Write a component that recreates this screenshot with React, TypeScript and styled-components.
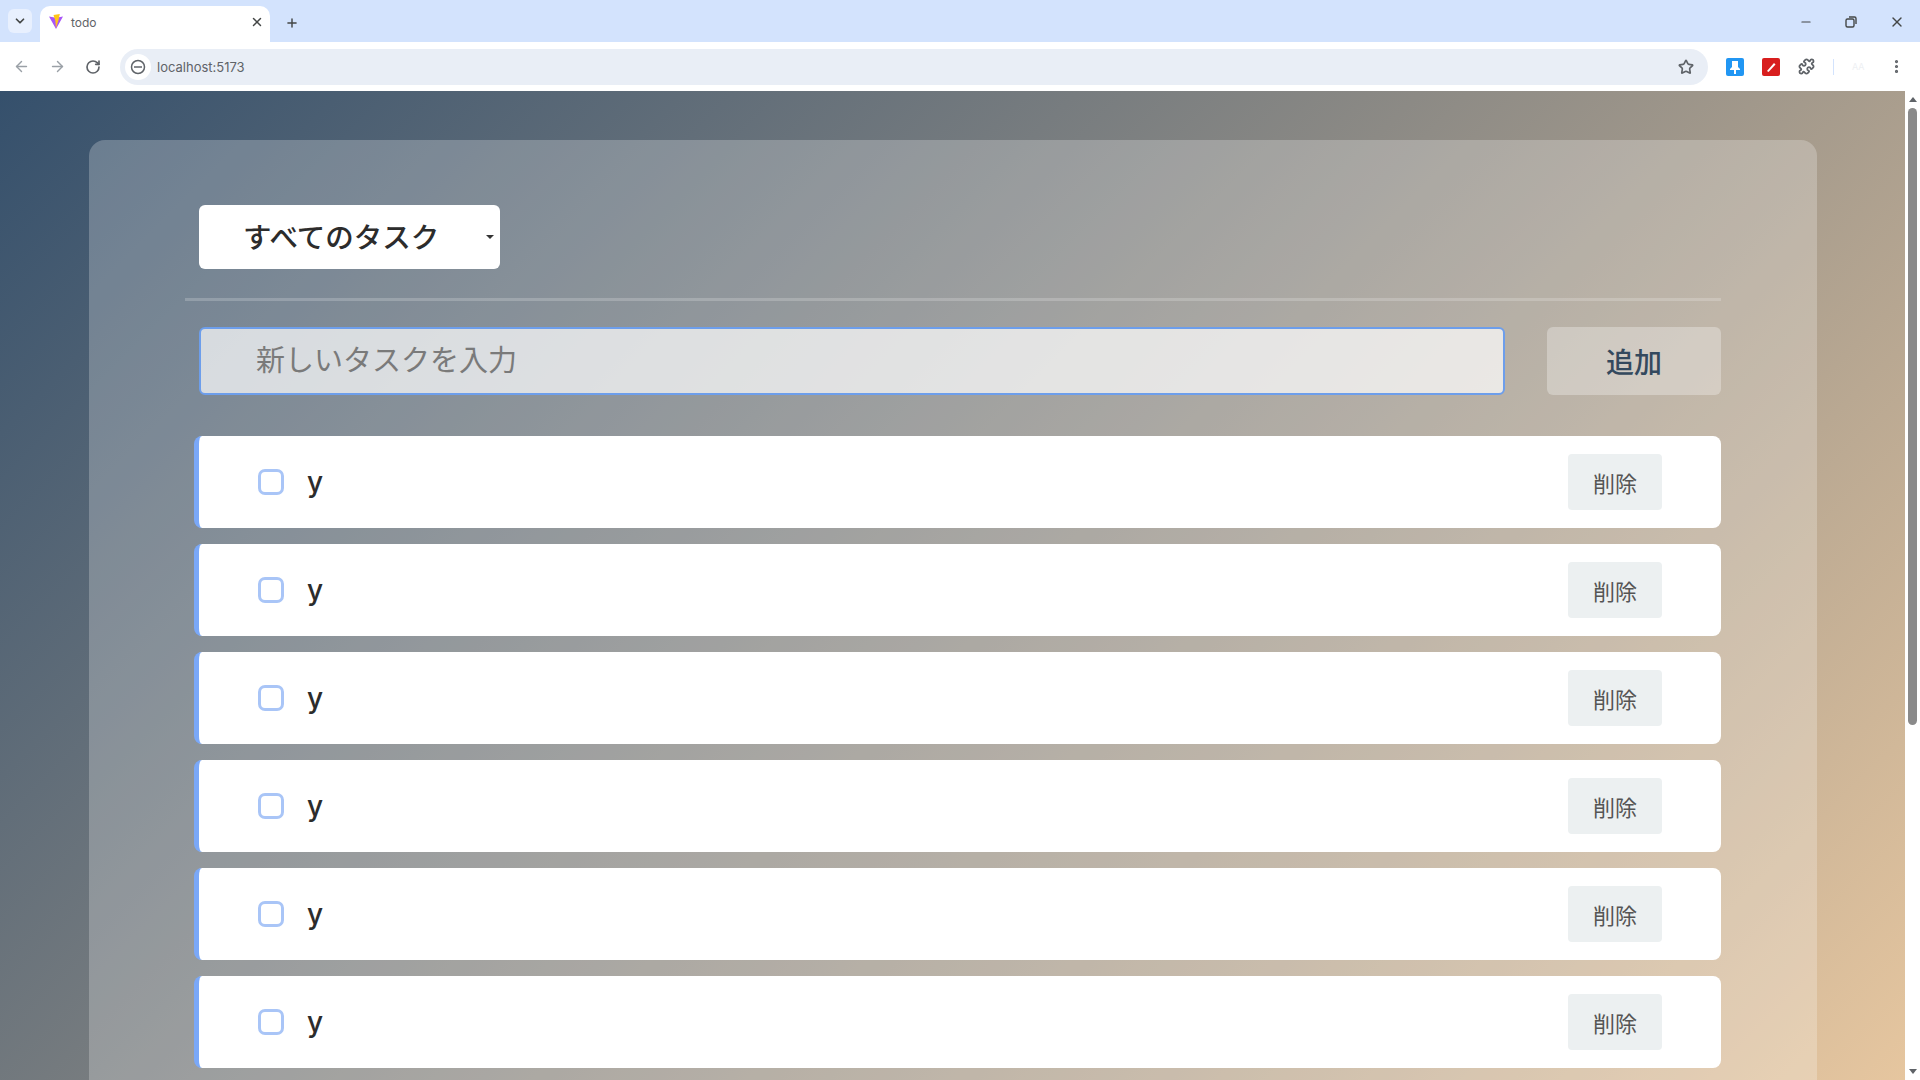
import React from "react";
import styled, { createGlobalStyle } from "styled-components";
import { ArrowLeft, ArrowRight, ChevronDown, EllipsisVertical, Minus, Plus, Puzzle, RotateCw, Star, X } from "lucide-react";

const GlobalStyle = createGlobalStyle`
  * { box-sizing: border-box; }
  html, body { margin: 0; height: 100%; overflow: hidden; }
  body { font-family: "Inter", "Noto Sans CJK JP", sans-serif; }
`;

const Shell = styled.div`
  display: flex;
  flex-direction: column;
  width: 1920px;
  height: 1080px;
  overflow: hidden;
`;

const TabStrip = styled.div`
  display: flex;
  align-items: flex-end;
  height: 42px;
  padding-left: 8px;
  background: #d3e3fd;
  color: #444746;
`;

const TabMenu = styled.div`
  display: flex;
  align-items: center;
  justify-content: center;
  width: 24px;
  height: 24px;
  margin: 0 8px 9px 0;
  border-radius: 6px;
  background: #e8f0fe;
`;

const Tab = styled.div`
  display: flex;
  align-items: center;
  width: 230px;
  height: 36px;
  padding: 0 6px 4px 8px;
  border-radius: 10px 10px 0 0;
  background: #fff;
`;

const TabTitle = styled.span`
  flex: 1;
  margin-left: 7px;
  font-size: 12px;
  color: #5f6368;
`;

const NewTab = styled.div`
  display: flex;
  align-items: center;
  margin: 0 0 12px 15px;
`;

const WindowButtons = styled.div`
  display: flex;
  gap: 31px;
  align-items: center;
  margin: 0 15px 12px auto;
`;

const Toolbar = styled.div`
  display: flex;
  align-items: center;
  height: 49px;
  padding: 0 15px 0 13px;
  background: #fff;
  color: #5f6368;
`;

const NavIcons = styled.div`
  display: flex;
  gap: 19px;
  align-items: center;
  margin-right: 19px;
`;

const Omnibox = styled.div`
  display: flex;
  align-items: center;
  flex: 1;
  height: 36px;
  padding: 0 14px 0 5px;
  border-radius: 18px;
  background: #e9eef6;
`;

const SiteIcon = styled.div`
  display: flex;
  align-items: center;
  justify-content: center;
  width: 26px;
  height: 26px;
  border-radius: 50%;
  background: #fff;
`;

const Url = styled.span`
  flex: 1;
  margin-left: 6px;
  font-size: 13px;
  color: #5f6368;
`;

const Extensions = styled.div`
  display: flex;
  align-items: center;
  gap: 18px;
  margin-left: 18px;
`;

const Separator = styled.div`
  width: 1px;
  height: 16px;
  background: #d3e3fd;
`;

const Profile = styled.span`
  width: 18px;
  font-size: 9px;
  color: #eef0f3;
`;

const Viewport = styled.div`
  display: flex;
  flex: 1;
  min-height: 0;
`;

const Page = styled.main`
  flex: 1;
  min-width: 0;
  padding: 49px 88px 0 89px;
  background: linear-gradient(135deg, #35506c 0%, #e6c69f 100%);
`;

const Card = styled.section`
  padding: 65px 96px 48px;
  border-radius: 16px;
  background: rgba(255, 255, 255, 0.24);
`;

const SelectRow = styled.div`
  padding: 0 0 29px 14px;
  border-bottom: 3px solid rgba(255, 255, 255, 0.2);
`;

const FilterSelect = styled.div`
  display: flex;
  align-items: center;
  width: 301px;
  height: 64px;
  padding: 0 6px 3px 44px;
  border-radius: 6px;
  background: #fff;
  color: #2c2c2c;
  font-size: 28.500px;
  font-weight: 500;
`;

const Caret = styled.span`
  width: 0;
  height: 0;
  margin: 3px 0 0 auto;
  border-left: 4px solid transparent;
  border-right: 4px solid transparent;
  border-top: 4px solid #333;
`;

const AddRow = styled.div`
  display: flex;
  align-items: stretch;
  gap: 42px;
  margin: 26px 0 41px 14px;
`;

const TaskInput = styled.div`
  display: flex;
  align-items: center;
  flex: 1;
  height: 68px;
  padding: 0 0 6px 55px;
  border: 2px solid #6d9eeb;
  border-radius: 6px;
  background: rgba(255, 255, 255, 0.7);
  color: #7a7a7a;
  font-size: 29px;
`;

const AddButton = styled.div`
  display: flex;
  align-items: center;
  justify-content: center;
  width: 174px;
  border-radius: 6px;
  background: rgba(255, 255, 255, 0.3);
  color: #34495e;
  font-size: 28px;
  font-weight: 500;
`;

const TaskList = styled.ul`
  display: flex;
  flex-direction: column;
  gap: 16px;
  margin: 0 0 0 9px;
  padding: 0;
  list-style: none;
`;

const TaskItem = styled.li`
  display: flex;
  align-items: center;
  height: 92px;
  padding: 0 59px;
  border-left: 5px solid #7aa8f8;
  border-radius: 8px;
  background: #fff;
`;

const Checkbox = styled.span`
  width: 26px;
  height: 26px;
  border: 3px solid #a9c5f7;
  border-radius: 7px;
`;

const TaskText = styled.span`
  flex: 1;
  margin-left: 23px;
  color: #2c2c2c;
  font-size: 28px;
  font-weight: 500;
`;

const DeleteButton = styled.div`
  display: flex;
  align-items: center;
  justify-content: center;
  width: 94px;
  height: 56px;
  border-radius: 4px;
  background: #ecf0f1;
  color: #555;
  font-size: 22px;
`;

const Scrollbar = styled.div`
  display: flex;
  flex-direction: column;
  align-items: center;
  width: 15px;
  background: #fff;
`;

const ScrollArrow = styled.span<{ $down?: boolean }>`
  width: 0;
  height: 0;
  margin: ${(p) => (p.$down ? "auto 0 6px" : "6px 0")};
  border-left: 4px solid transparent;
  border-right: 4px solid transparent;
  ${(p) => (p.$down ? "border-top: 5px solid #5f6368;" : "border-bottom: 5px solid #5f6368;")}
`;

const ScrollThumb = styled.div`
  width: 9px;
  height: 617px;
  border-radius: 5px;
  background: #8a8a8a;
`;

const ViteLogo = () => (
  <svg width="16" height="16" viewBox="0 0 16 16">
    <path d="M1 2.500 8 15l7-12.500-7 1.300z" fill="#a855f7" />
    <path d="M5.500 1 11.800 0 10.500 6 8 14 7.300 6.500z" fill="#ffc517" />
  </svg>
);

const ExtensionBlue = () => (
  <svg width="18" height="18" viewBox="0 0 18 18">
    <rect width="18" height="18" rx="2" fill="#2196f3" />
    <path d="M6 3h6v6l2 2v1H10v4H8v-4H4v-1l2-2z" fill="#fff" />
  </svg>
);

const ExtensionRed = () => (
  <svg width="18" height="18" viewBox="0 0 18 18">
    <rect width="18" height="18" rx="2" fill="#d81e1e" />
    <path d="M5 13 12 5l1.500 1.500L6.500 14z" fill="#fff" />
  </svg>
);

const tasks = [1, 2, 3, 4, 5, 6];

export default function App() {
  return (
    <Shell>
      <GlobalStyle />
      <TabStrip>
        <TabMenu>
          <ChevronDown size={14} strokeWidth={3} />
        </TabMenu>
        <Tab>
          <ViteLogo />
          <TabTitle>todo</TabTitle>
          <X size={14} strokeWidth={2.500} />
        </Tab>
        <NewTab>
          <Plus size={14} strokeWidth={2.500} />
        </NewTab>
        <WindowButtons>
          <Minus size={14} />
          <svg width="14" height="14" viewBox="0 0 14 14" fill="none" stroke="currentColor" strokeWidth="1.400">
            <rect x="2" y="4" width="8" height="8" rx="1.500" />
            <path d="M5 2h5.500A1.500 1.500 0 0 1 12 3.500V9" />
          </svg>
          <X size={16} />
        </WindowButtons>
      </TabStrip>
      <Toolbar>
        <NavIcons>
          <ArrowLeft size={17} color="#9aa0a6" />
          <ArrowRight size={17} color="#9aa0a6" />
          <RotateCw size={16} strokeWidth={2.500} />
        </NavIcons>
        <Omnibox>
          <SiteIcon>
            <svg width="16" height="16" viewBox="0 0 16 16" fill="none" stroke="#5f6368" strokeWidth="1.500">
              <circle cx="8" cy="8" r="6.500" />
              <path d="M4 8h8" />
            </svg>
          </SiteIcon>
          <Url>localhost:5173</Url>
          <Star size={16} strokeWidth={2.500} />
        </Omnibox>
        <Extensions>
          <ExtensionBlue />
          <ExtensionRed />
          <Puzzle size={17} strokeWidth={2.500} />
          <Separator />
          <Profile>AA</Profile>
          <EllipsisVertical size={17} strokeWidth={2.500} />
        </Extensions>
      </Toolbar>
      <Viewport>
        <Page>
          <Card>
            <SelectRow>
              <FilterSelect>
                すべてのタスク
                <Caret />
              </FilterSelect>
            </SelectRow>
            <AddRow>
              <TaskInput>新しいタスクを入力</TaskInput>
              <AddButton>追加</AddButton>
            </AddRow>
            <TaskList>
              {tasks.map((id) => (
                <TaskItem key={id}>
                  <Checkbox />
                  <TaskText>y</TaskText>
                  <DeleteButton>削除</DeleteButton>
                </TaskItem>
              ))}
            </TaskList>
          </Card>
        </Page>
        <Scrollbar>
          <ScrollArrow />
          <ScrollThumb />
          <ScrollArrow $down />
        </Scrollbar>
      </Viewport>
    </Shell>
  );
}
